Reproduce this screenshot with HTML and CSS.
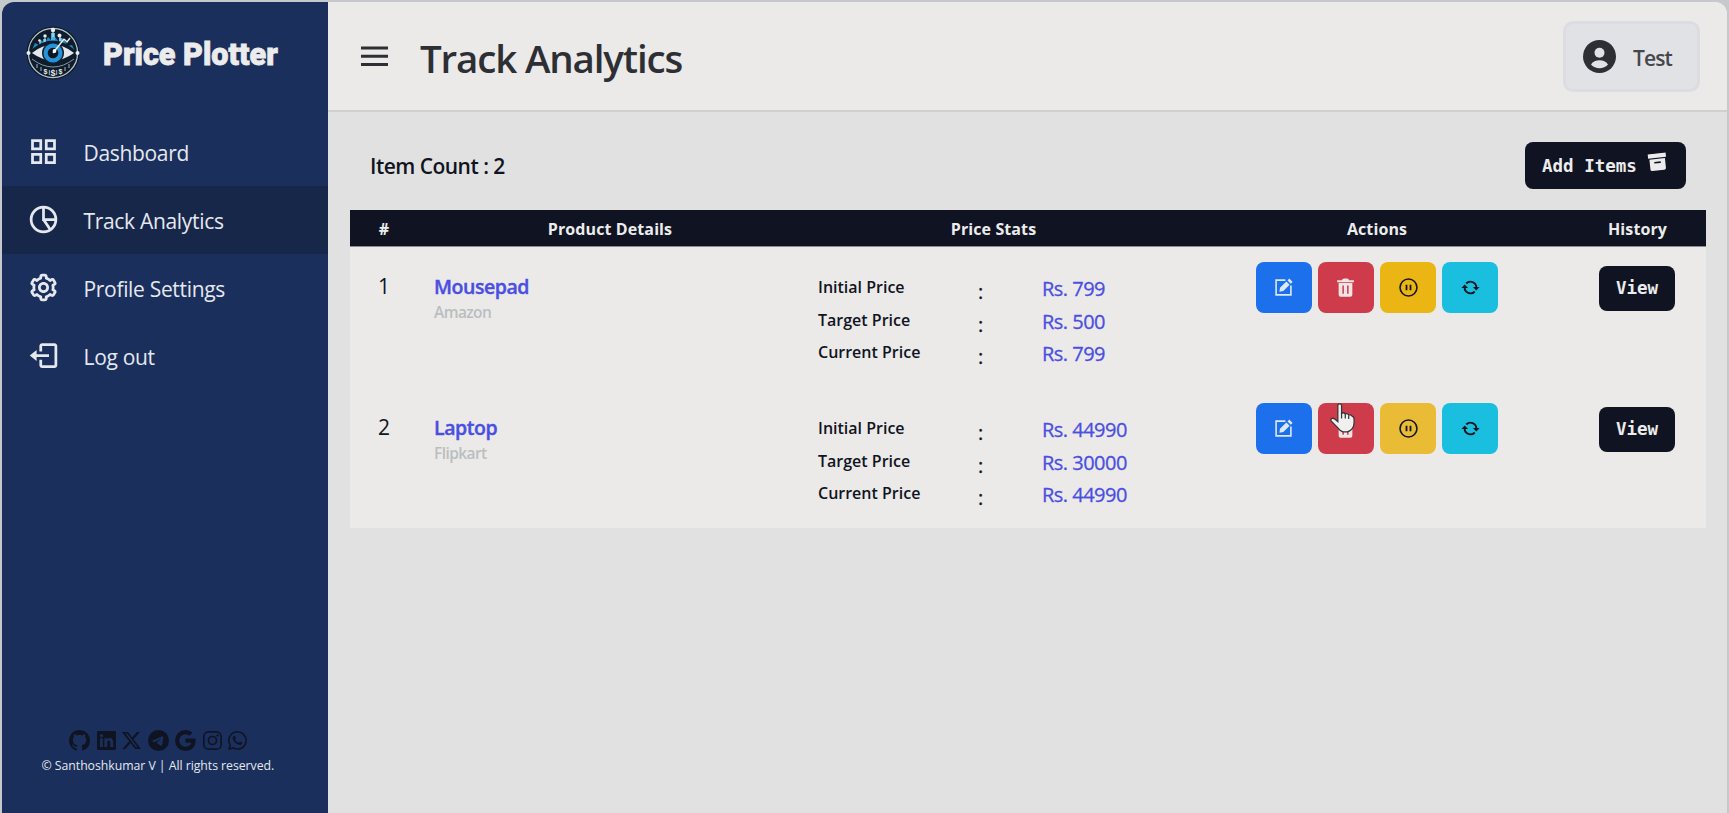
FILE: index.html
```html
<!DOCTYPE html>
<html lang="en">
<head>
<meta charset="utf-8">
<title>Price Plotter</title>
<link rel="stylesheet" href="styles.css">
</head>
<body>
<svg class="defs" width="0" height="0">
  <symbol id="edit" viewBox="0 0 20 20"><path d="M12 2.200H2.200v15.600h15.600V8" fill="none" stroke="currentColor" stroke-width="1.700"/><path d="M5.700 14.500l.6-4.200 6.700-6.700 3.500 3.500-6.700 6.700zM14.200 2.500l1.900-1.900 3.500 3.500-1.900 1.900z" fill="currentColor"/></symbol>
  <symbol id="trash" viewBox="0 0 20 20"><path d="M1.200 2.400h5Q6.600.4 8.400.4h3.200q1.800 0 2.200 2h5v2.200H1.200z" fill="currentColor"/><path fill-rule="evenodd" d="M2.800 5.200h14.400V17.600q0 2.100-2.100 2.100H4.900q-2.100 0-2.100-2.100zM6.700 8v8.700h1.600V8zM11.700 8v8.700h1.600V8z" fill="currentColor"/></symbol>
  <symbol id="pause" viewBox="0 0 20 20"><circle cx="10" cy="10" r="8.900" fill="none" stroke="currentColor" stroke-width="1.700"/><path d="M7.900 7v6M12.100 7v6" stroke="currentColor" stroke-width="1.900"/></symbol>
  <symbol id="sync" viewBox="0 0 20 20"><path d="M5.500 5.800A6.200 6.200 0 0 1 16.200 10M14.500 14.200A6.200 6.200 0 0 1 3.800 10" fill="none" stroke="currentColor" stroke-width="2"/><path d="M12.600 9.500h7l-3.500 3.600zM.4 10.500h7L3.900 6.900z" fill="currentColor"/></symbol>
</svg>
<div class="window">
  <aside class="sidebar">
    <div class="brand">
      <svg class="logo" viewBox="0 0 54 54">
        <circle cx="27" cy="27" r="26.500" fill="#0f1c2b"/>
        <circle cx="27" cy="27" r="24.600" fill="none" stroke="#b9c4cc" stroke-width="1.300"/>
        <path d="M6 24l3-7 4 2 2-5 4 3 3-6 4 4 3-4 4 5 4-4 5 8 4-1 3 6-8-4-14-5-13 4z" fill="#2389c4"/>
        <path d="M25 7h4v9h-4zM17 13h3v6h-3zM33 12h3v7h-3z" fill="#46b3e6"/>
        <path d="M27 3v8M14 15v5M19 12v5M34 10v5" stroke="#dfe6ea" stroke-width="1"/>
        <circle cx="27" cy="4" r="2.200" fill="#e9edef"/><circle cx="19" cy="10" r="1.700" fill="#e9edef"/><circle cx="33.500" cy="9.500" r="2" fill="#e9edef"/><circle cx="13.500" cy="14.500" r="1.300" fill="#e9edef"/>
        <path d="M2 27Q27 2 52 27Q27 50 2 27z" fill="#0f1c2b"/>
        <path d="M6 27Q27 10 48 27Q27 42 6 27z" fill="#e4e8ea"/>
        <circle cx="27" cy="27" r="11" fill="#0f2236"/><circle cx="27" cy="27" r="9.500" fill="#2793d6"/><circle cx="27" cy="27" r="5.300" fill="#0b1624"/>
        <path d="M27 27L38 13M38 13l3 3 3-4" fill="none" stroke="#e9edef" stroke-width="1.400"/><circle cx="28.500" cy="25" r="1.900" fill="#fff"/>
        <circle cx="2.500" cy="27" r="2" fill="#e9edef"/><circle cx="51.500" cy="27" r="2" fill="#e9edef"/>
        <path d="M6 33Q27 49 48 33" fill="none" stroke="#8796a3" stroke-width="1"/>
        <text x="27" y="49.500" class="logo-money" text-anchor="middle">$</text><text x="19.500" y="47.500" class="logo-money small" text-anchor="middle">$</text><text x="34.500" y="47.500" class="logo-money small" text-anchor="middle">$</text>
        <path d="M11 38v4M15 41v4M23.300 44v5M30.700 44v5M39 41v4M43 38v4" stroke="#aab6bf" stroke-width="1"/>
      </svg>
      <span class="brand-name">Price Plotter</span>
    </div>
    <nav class="nav">
      <a class="nav-item"><svg class="nav-icon" viewBox="0 0 24 24"><path fill-rule="evenodd" d="M3 3h8v8H3zM5 5v4h4V5zM13 3h8v8h-8zM15 5v4h4V5zM3 13h8v8H3zM5 15v4h4v-4zM13 13h8v8h-8zM15 15v4h4v-4z"/></svg><span class="t">Dashboard</span></a>
      <a class="nav-item active"><svg class="nav-icon" viewBox="0 0 24 24"><g fill="none" stroke="currentColor" stroke-width="2"><circle cx="12" cy="12" r="9"/><path d="M12 3v9h9M12 12l5 7.500"/></g></svg><span class="t">Track Analytics</span></a>
      <a class="nav-item"><svg class="nav-icon" viewBox="0 0 24 24"><path d="M12 16c2.206 0 4-1.794 4-4s-1.794-4-4-4-4 1.794-4 4 1.794 4 4 4zm0-6c1.084 0 2 .916 2 2s-.916 2-2 2-2-.916-2-2 .916-2 2-2z"/><path d="m2.845 16.136 1 1.730c.531.917 1.809 1.261 2.730.730l.529-.306A8.100 8.100 0 0 0 9 19.402V20c0 1.103.897 2 2 2h2c1.103 0 2-.897 2-2v-.598a8.132 8.132 0 0 0 1.896-1.111l.529.306c.923.530 2.198.188 2.731-.731l.999-1.729a2.001 2.001 0 0 0-.731-2.732l-.505-.292a7.718 7.718 0 0 0 0-2.224l.505-.292a2.002 2.002 0 0 0 .731-2.732l-.999-1.729c-.531-.920-1.808-1.265-2.731-.732l-.529.306A8.100 8.100 0 0 0 15 4.598V4c0-1.103-.897-2-2-2h-2c-1.103 0-2 .897-2 2v.598a8.132 8.132 0 0 0-1.896 1.111l-.529-.306c-.924-.531-2.200-.187-2.731.732l-.999 1.729a2.001 2.001 0 0 0 .731 2.732l.505.292a7.683 7.683 0 0 0 0 2.223l-.505.292a2.003 2.003 0 0 0-.731 2.733zm3.326-2.758A5.703 5.703 0 0 1 6 12c0-.462.058-.926.170-1.378a.999.999 0 0 0-.470-1.108l-1.123-.650.998-1.729 1.145.662a.997.997 0 0 0 1.188-.142 6.071 6.071 0 0 1 2.384-1.399A1 1 0 0 0 11 5.300V4h2v1.300a1 1 0 0 0 .708.956 6.083 6.083 0 0 1 2.384 1.399.999.999 0 0 0 1.188.142l1.144-.661 1 1.729-1.124.649a1 1 0 0 0-.470 1.108c.112.452.170.916.170 1.378 0 .461-.058.925-.171 1.378a1 1 0 0 0 .471 1.108l1.123.649-.998 1.729-1.145-.661a.996.996 0 0 0-1.188.142 6.071 6.071 0 0 1-2.384 1.399A1 1 0 0 0 13 18.700l.002 1.300H11v-1.300a1 1 0 0 0-.708-.956 6.083 6.083 0 0 1-2.384-1.399.992.992 0 0 0-1.188-.141l-1.144.662-1-1.729 1.124-.651a1 1 0 0 0 .471-1.108z"/></svg><span class="t">Profile Settings</span></a>
      <a class="nav-item"><svg class="nav-icon" viewBox="0 0 24 24"><path d="m2 12 5 4v-3h9v-2H7V8z"/><path d="M20 3h-9c-1.100 0-2 .9-2 2v4h2V5h9v14h-9v-4H9v4c0 1.100.9 2 2 2h9c1.100 0 2-.9 2-2V5c0-1.100-.9-2-2-2z"/></svg><span class="t">Log out</span></a>
    </nav>
    <footer class="footer">
      <div class="social">
        <svg class="s21" viewBox="0 0 16 16"><path d="M8 0C3.580 0 0 3.580 0 8c0 3.540 2.290 6.530 5.470 7.590.4.070.550-.170.550-.380 0-.190-.010-.820-.010-1.490-2.010.370-2.530-.490-2.690-.940-.090-.230-.480-.940-.820-1.130-.280-.150-.680-.520-.010-.530.630-.010 1.080.580 1.230.820.720 1.210 1.870.870 2.330.660.070-.520.280-.870.510-1.070-1.780-.2-3.640-.890-3.640-3.950 0-.870.310-1.590.820-2.150-.080-.2-.360-1.020.080-2.120 0 0 .670-.210 2.200.820.640-.180 1.320-.270 2-.270s1.360.090 2 .270c1.530-1.040 2.200-.820 2.200-.820.440 1.100.160 1.920.080 2.120.510.560.820 1.270.820 2.150 0 3.070-1.870 3.750-3.650 3.950.290.250.540.730.540 1.480 0 1.070-.010 1.930-.010 2.200 0 .210.150.460.550.380A8.010 8.010 0 0 0 16 8c0-4.420-3.580-8-8-8"/></svg>
        <svg class="s19" viewBox="0 0 16 16"><path d="M0 1.146C0 .513.526 0 1.175 0h13.650C15.474 0 16 .513 16 1.146v13.708c0 .633-.526 1.146-1.175 1.146H1.175C.526 16 0 15.487 0 14.854zm4.943 12.248V6.169H2.542v7.225zm-1.200-8.212c.837 0 1.358-.554 1.358-1.248-.015-.709-.520-1.248-1.342-1.248S2.400 3.226 2.400 3.934c0 .694.521 1.248 1.327 1.248zm4.908 8.212V9.359c0-.216.016-.432.080-.586.173-.431.568-.878 1.232-.878.869 0 1.216.662 1.216 1.634v3.865h2.401V9.250c0-2.220-1.184-3.252-2.764-3.252-1.274 0-1.845.7-2.165 1.193V6.169h-2.400c.030.678 0 7.225 0 7.225z"/></svg>
        <svg class="s19" viewBox="0 0 16 16"><path d="M12.600.750h2.454l-5.360 6.142L16 15.250h-4.937l-3.867-5.070-4.425 5.070H.316l5.733-6.570L0 .750h5.063l3.495 4.633L12.601.750Zm-.860 13.028h1.360L4.323 2.145H2.865z"/></svg>
        <svg class="s21" viewBox="0 0 16 16"><path d="M16 8A8 8 0 1 1 0 8a8 8 0 0 1 16 0M8.287 5.906q-1.168.486-4.666 2.010-.567.225-.595.442c-.030.243.275.339.690.470l.175.055c.408.133.958.288 1.243.294q.390.010.868-.320 3.269-2.206 3.374-2.230c.050-.012.120-.026.166.016s.042.120.037.141c-.030.129-1.227 1.241-1.846 1.817-.193.180-.330.307-.358.336a8 8 0 0 1-.188.186c-.380.366-.664.640.015 1.088.327.216.589.393.850.571.284.194.568.387.936.629q.140.092.270.187c.331.236.630.448.997.414.214-.020.435-.220.547-.820.265-1.417.786-4.486.906-5.751a1.400 1.400 0 0 0-.013-.315.340.340 0 0 0-.114-.217.530.530 0 0 0-.310-.093c-.3.005-.763.166-2.984 1.090"/></svg>
        <svg class="s21" viewBox="0 0 16 16"><path d="M15.545 6.558a9.400 9.400 0 0 1 .139 1.626c0 2.434-.870 4.492-2.384 5.885h.002C11.978 15.292 10.158 16 8 16A8 8 0 1 1 8 0a7.700 7.700 0 0 1 5.352 2.082l-2.284 2.284A4.350 4.350 0 0 0 8 3.166c-2.087 0-3.860 1.408-4.492 3.304a4.800 4.800 0 0 0 0 3.063h.003c.635 1.893 2.405 3.301 4.492 3.301 1.078 0 2.004-.276 2.722-.764h-.003a3.700 3.700 0 0 0 1.599-2.431H8v-3.080z"/></svg>
        <svg class="s19" viewBox="0 0 16 16"><rect x=".7" y=".7" width="14.600" height="14.600" rx="4" fill="none" stroke="currentColor" stroke-width="1.400"/><circle cx="8" cy="8" r="3.400" fill="none" stroke="currentColor" stroke-width="1.400"/><circle cx="12.300" cy="3.700" r="1"/></svg>
        <svg class="s19" viewBox="0 0 16 16"><path d="M13.601 2.326A7.850 7.850 0 0 0 7.994 0C3.627 0 .068 3.558.064 7.926c0 1.399.366 2.760 1.057 3.965L0 16l4.204-1.102a7.900 7.900 0 0 0 3.790.965h.004c4.368 0 7.926-3.558 7.930-7.930A7.900 7.900 0 0 0 13.600 2.326zM7.994 14.521a6.600 6.600 0 0 1-3.356-.920l-.240-.144-2.494.654.666-2.433-.156-.251a6.560 6.560 0 0 1-1.007-3.505c0-3.626 2.957-6.584 6.591-6.584a6.560 6.560 0 0 1 4.660 1.931 6.560 6.560 0 0 1 1.928 4.660c-.004 3.639-2.961 6.592-6.592 6.592m3.615-4.934c-.197-.099-1.170-.578-1.353-.646-.182-.065-.315-.099-.445.099-.133.197-.513.646-.627.775-.114.133-.232.148-.430.050-.197-.1-.836-.308-1.592-.985-.590-.525-.985-1.175-1.103-1.372-.114-.198-.011-.304.088-.403.087-.088.197-.232.296-.346.1-.114.133-.198.198-.330.065-.134.034-.248-.015-.347-.050-.099-.445-1.076-.612-1.470-.160-.389-.323-.335-.445-.340-.114-.007-.247-.007-.380-.007a.730.730 0 0 0-.529.247c-.182.198-.691.677-.691 1.654s.710 1.916.810 2.049c.098.133 1.394 2.132 3.383 2.992.470.205.840.326 1.129.418.475.152.904.129 1.246.080.380-.058 1.171-.480 1.338-.943.164-.464.164-.860.114-.994-.050-.133-.182-.198-.380-.297"/></svg>
      </div>
      <p class="copyright">© Santhoshkumar V | All rights reserved.</p>
    </footer>
  </aside>
  <main class="main">
    <header class="topbar">
      <svg class="menu" viewBox="0 0 27 21"><path d="M0 2h27M0 10.300h27M0 18.600h27" stroke="currentColor" stroke-width="3"/></svg>
      <h1 class="title">Track Analytics</h1>
      <div class="profile">
        <svg class="avatar" viewBox="0 0 33 33"><circle cx="16.500" cy="16.500" r="16.500" fill="#2d2f35"/><circle cx="16.500" cy="12.800" r="5" fill="#e1e2e6"/><path d="M8 24.500Q11 20.300 16.500 20.300T25 24.500Q21.500 28.300 16.500 28.300T8 24.500z" fill="#e1e2e6"/></svg>
        <span class="user">Test</span>
      </div>
    </header>
    <section class="toolbar">
      <div class="count">Item Count : 2</div>
      <button class="add"><span>Add Items</span><svg class="box" viewBox="0 0 20 18"><path fill-rule="evenodd" d="M.5 0h19v4.500H.5zM1.800 5.700h16.400V16q0 1.800-1.800 1.800H3.600Q1.800 17.800 1.800 16zM6.600 8.600v1.700h6.800V8.600z" fill="currentColor"/></svg></button>
    </section>
    <div class="table">
      <div class="row head"><div>#</div><div>Product Details</div><div>Price Stats</div><div>Actions</div><div>History</div></div>
      <div class="row">
        <div class="num">1</div>
        <div class="product"><div class="name">Mousepad</div><div class="store">Amazon</div></div>
        <div class="stats">
          <div class="label">Initial Price</div><div class="colon">:</div><div class="price">Rs. 799</div>
          <div class="label">Target Price</div><div class="colon">:</div><div class="price">Rs. 500</div>
          <div class="label">Current Price</div><div class="colon">:</div><div class="price">Rs. 799</div>
        </div>
        <div class="actions"><button class="btn blue"><svg><use href="#edit"/></svg></button><button class="btn red"><svg><use href="#trash"/></svg></button><button class="btn yellow"><svg><use href="#pause"/></svg></button><button class="btn cyan"><svg><use href="#sync"/></svg></button></div>
        <div class="history"><button class="view">View</button></div>
      </div>
      <div class="row">
        <div class="num">2</div>
        <div class="product"><div class="name">Laptop</div><div class="store">Flipkart</div></div>
        <div class="stats">
          <div class="label">Initial Price</div><div class="colon">:</div><div class="price">Rs. 44990</div>
          <div class="label">Target Price</div><div class="colon">:</div><div class="price">Rs. 30000</div>
          <div class="label">Current Price</div><div class="colon">:</div><div class="price">Rs. 44990</div>
        </div>
        <div class="actions"><button class="btn blue"><svg><use href="#edit"/></svg></button><button class="btn red"><svg><use href="#trash"/></svg><svg class="cursor" viewBox="0 0 24 29"><path d="M7.500 2.500Q7.500.8 9.300.8T11.100 2.500V10Q13.500 8.600 14.700 10.500 17 9.500 18 11.600 20.500 10.800 21.500 13 23.200 13.200 23.200 16V19Q23.200 22 21.500 24.500 19 28 14.500 28 10.500 28 8 24.500L1.200 17.500Q.2 16 1.500 15 3 14.300 4.500 15.500L7.500 18z" fill="#f1f0ee" stroke="#33353a" stroke-width="1.200"/><path d="M11.100 10v5M14.700 10.500V15M18 11.800V15.500" stroke="#33353a" stroke-width="1.200"/></svg></button><button class="btn yellow hover"><svg><use href="#pause"/></svg></button><button class="btn cyan"><svg><use href="#sync"/></svg></button></div>
        <div class="history"><button class="view">View</button></div>
      </div>
    </div>
  </main>
</div>
</body>
</html>
```
FILE: styles.css
```css
* { box-sizing: border-box; }
body { margin: 0; height: 813px; overflow: hidden; background: #c5c9cd; padding: 2px 2px 0; font-family: "Open Sans", "Noto Sans", sans-serif; color: #101422; }
button { border: 0; padding: 0; font: inherit; }
svg { display: block; flex: none; }
.defs { position: absolute; }
.window { display: flex; height: 811px; border-radius: 12px 12px 0 0; overflow: hidden; background: #e1e1e1; }

.sidebar { width: 326px; background: #1a2f5c; color: #e5e8ee; display: flex; flex-direction: column; flex: none; }
.brand { height: 116px; padding: 24px 0 0 24px; display: flex; align-items: flex-start; }
.logo { width: 54px; height: 54px; }
.logo-money { font: bold 9px "Liberation Sans", sans-serif; fill: #e4e8ea; }
.logo-money.small { font-size: 7px; }
.brand-name { margin-left: 23px; font: 900 32px/56px Roboto, sans-serif; color: #ececec; -webkit-text-stroke: .8px #ececec; transform: scaleX(.955); transform-origin: left; white-space: nowrap; }
.nav-item { display: flex; align-items: center; height: 67.800px; padding-left: 24.500px; gap: 24px; font-size: 21px; letter-spacing: -.32px; }
.nav-item .t { padding-top: 3px; }
.nav-item.active { background: #17274a; }
.nav-icon { width: 33px; height: 33px; fill: currentColor; }
.footer { margin-top: auto; height: 84px; }
.social { display: flex; gap: 6.500px; color: #101422; padding-left: 67px; align-items: center; height: 22px; }
.social svg { fill: currentColor; }
.s21 { width: 21px; height: 21px; }
.s19 { width: 19px; height: 19px; }
.copyright { margin: 5px 0 0; padding-left: 39.500px; font-size: 12.300px; letter-spacing: -.05px; line-height: 20px; white-space: nowrap; }

.main { flex: 1; min-width: 0; }
.topbar { height: 110px; background: #ebeae8; border-bottom: 2px solid #d0d0d0; display: flex; align-items: center; padding: 0 27px 0 33px; color: #2d2f35; }
.menu { width: 27px; height: 21px; }
.title { margin: 3px 0 0 32px; font-size: 38.500px; letter-spacing: -1.150px; font-weight: 600; line-height: 50px; white-space: nowrap; }
.profile { margin-left: auto; width: 137px; height: 71px; border: 3px solid #dcdde1; border-radius: 10px; background: #e1e2e6; display: flex; align-items: center; gap: 17px; padding-left: 17px; font-size: 21px; font-weight: 600; letter-spacing: -.9px; color: #46474b; }
.user { padding-top: 3px; }
.avatar { width: 33px; height: 33px; }

.toolbar { display: flex; justify-content: space-between; padding: 30px 41px 0 42px; height: 98px; }
.count { font-size: 21px; font-weight: 600; line-height: 48px; letter-spacing: -.520px; }
.add, .view { background: #101422; color: #ececec; border-radius: 8px; font: bold 17.500px "DejaVu Sans Mono", monospace; }
.add { width: 161px; height: 47px; display: flex; align-items: center; padding-left: 17px; gap: 11px; white-space: nowrap; }
.box { width: 19px; height: 18px; transform: rotate(-6deg); margin-top: -7px; }

.table { margin: 0 21px 0 22px; background: #ebeae8; }
.row { display: grid; grid-template-columns: 68px 384px 383px 384px 137px; height: 141px; }
.row.head { height: 36px; background: #101422; box-shadow: 0 1px #8b8d94; color: #ececec; font-size: 16px; font-weight: 700; letter-spacing: .1px; line-height: 39px; text-align: center; }
.num { text-align: center; font-size: 21px; line-height: 30px; padding-top: 25px; }
.product { padding: 27px 0 0 16px; }
.name { font-size: 19.500px; font-weight: 600; letter-spacing: -.450px; -webkit-text-stroke: .4px #4a4fe2; line-height: 28px; color: #4a4fe2; }
.store { font-size: 15.500px; font-weight: 600; letter-spacing: -.580px; line-height: 22px; color: #babec2; }
.stats { display: grid; grid-template-columns: 160px 64px 1fr; grid-auto-rows: 32.500px; padding: 26px 0 0 16px; white-space: nowrap; }
.label { font-size: 16px; font-weight: 600; line-height: 31px; }
.colon { font-size: 20px; line-height: 39px; -webkit-text-stroke: .3px; }
.price { font-size: 20px; letter-spacing: -.520px; -webkit-text-stroke: .3px #4a4fe2; line-height: 34px; color: #4a4fe2; }
.actions { display: flex; gap: 6.300px; padding: 16px 0 0 70.500px; }
.btn { width: 56px; height: 51px; border-radius: 8px; display: grid; place-items: center; color: #14171d; position: relative; }
.btn svg { width: 19px; height: 19px; }
.blue { background: #1c70ec; color: #dde8f5; }
.red { background: #ce3c4b; color: #f0e4e5; }
.yellow { background: #ebb513; }
.yellow.hover { background: #eabb35; }
.cyan { background: #1abfe0; }
.btn .cursor { position: absolute; left: 12px; top: 0; width: 25px; height: 30px; }
.history { padding: 20px 0 0 30px; }
.view { width: 76px; height: 44.500px; display: block; }
```
